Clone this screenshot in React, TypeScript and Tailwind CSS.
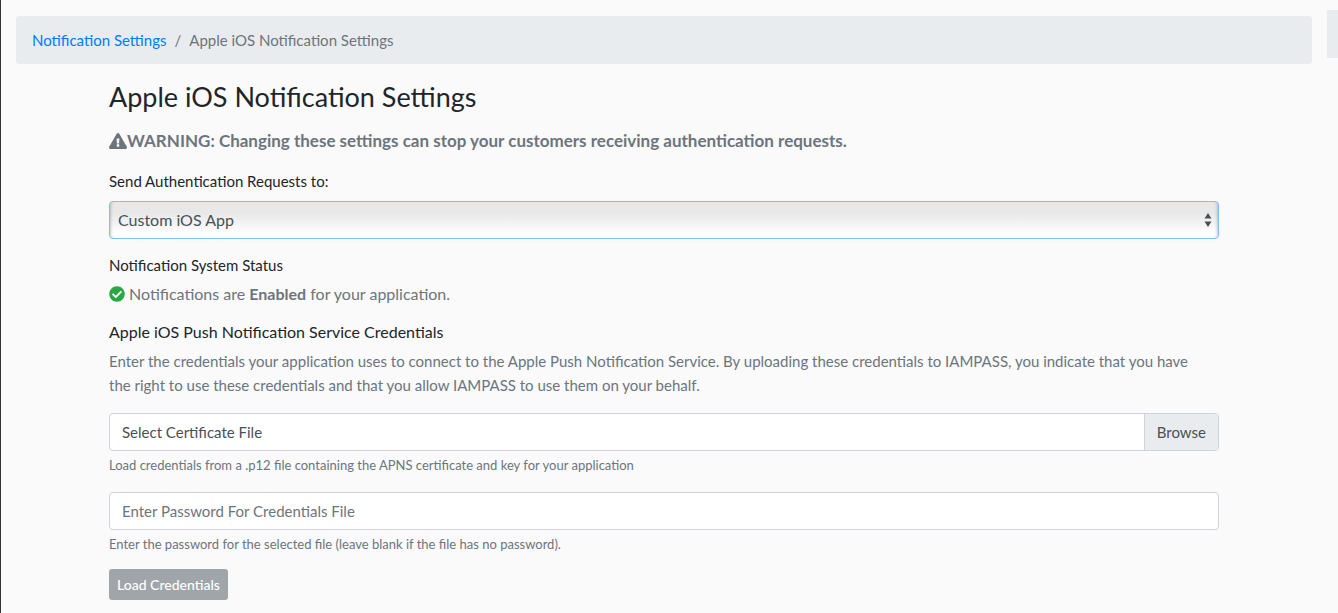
import React from "react";
import { FaCheckCircle, FaExclamationTriangle } from "react-icons/fa";

function Breadcrumb() {
  return (
    <nav aria-label="Breadcrumb" className="rounded bg-[#e8ecef] px-4 py-3">
      <ol className="flex gap-2 text-[#6c757d]">
        <li>
          <a href="#notifications" className="text-[#007bff]">
            Notification Settings
          </a>
        </li>
        <li aria-hidden="true">/</li>
        <li aria-current="page">Apple iOS Notification Settings</li>
      </ol>
    </nav>
  );
}

function TargetSelect() {
  return (
    <div>
      <label htmlFor="target" className="mb-2 block">
        Send Authentication Requests to:
      </label>
      <div className="grid items-center">
        <select
          id="target"
          defaultValue="custom"
          className="col-start-1 row-start-1 h-[38px] w-full appearance-none rounded border border-[#80bdff] bg-linear-to-b from-[#e8e8e8] from-30% to-white to-90% px-2 text-base text-[#495057] shadow-[inset_3px_0_3px_-2px_rgba(0,0,0,0.2),inset_-3px_0_3px_-2px_rgba(0,0,0,0.2)] outline-none"
        >
          <option value="custom">Custom iOS App</option>
          <option value="iampass">IAMPASS App</option>
        </select>
        <svg
          aria-hidden="true"
          viewBox="0 0 8 14"
          className="pointer-events-none col-start-1 row-start-1 mr-[7px] h-3.5 w-2 justify-self-end"
        >
          <path fill="#495057" d="M4 0L0.5 5.5h7zM4 14L0.5 8.5h7z" />
        </svg>
      </div>
    </div>
  );
}

export default function App() {
  return (
    <div className="flex min-h-screen border-l border-[#333333] bg-[#fafafa] font-['Lato',sans-serif] text-[15px] leading-6 text-[#212529]">
      <main className="min-w-0 flex-1 px-[15px] py-4">
        <Breadcrumb />
        <div className="mx-auto mt-4 max-w-[1110px]">
          <h1 className="text-[27px] leading-[34px]">Apple iOS Notification Settings</h1>
          <p className="mt-[15px] mb-4 flex items-center text-[17px] leading-6 font-bold text-[#6c757d]">
            <FaExclamationTriangle aria-hidden="true" className="h-4 w-[18px] shrink-0" />
            WARNING: Changing these settings can stop your customers receiving authentication requests.
          </p>

          <form onSubmit={(event) => event.preventDefault()}>
            <TargetSelect />

            <section className="mt-[14px]">
              <h2>Notification System Status</h2>
              <p className="mt-[5px] flex items-center gap-1 text-base leading-6 text-[#6c757d]">
                <FaCheckCircle aria-hidden="true" className="size-4 shrink-0 text-[#28a745]" />
                <span>
                  Notifications are <strong>Enabled</strong> for your application.
                </span>
              </p>
            </section>

            <section className="mt-[14px]">
              <h2 className="text-base leading-6">Apple iOS Push Notification Service Credentials</h2>
              <p className="mt-[5px] pr-3 text-[#6c757d]">
                Enter the credentials your application uses to connect to the Apple Push Notification
                Service. By uploading these credentials to IAMPASS, you indicate that you have the right
                to use these credentials and that you allow IAMPASS to use them on your behalf.
              </p>

              <div className="mt-4">
                <input id="certificate" type="file" accept=".p12" className="sr-only" />
                <label
                  htmlFor="certificate"
                  className="flex h-[38px] rounded border border-[#ced4da] bg-white text-[#495057]"
                >
                  <span className="flex flex-1 items-center px-3">Select Certificate File</span>
                  <span className="flex items-center rounded-r-[3px] border-l border-[#ced4da] bg-[#e9ecef] px-3">
                    Browse
                  </span>
                </label>
                <p className="mt-1 text-[13px] leading-5 text-[#6c757d]">
                  Load credentials from a .p12 file containing the APNS certificate and key for your
                  application
                </p>
              </div>

              <div className="mt-[17px]">
                <input
                  type="password"
                  aria-label="Password for credentials file"
                  placeholder="Enter Password For Credentials File"
                  className="block h-[38px] w-full rounded border border-[#ced4da] bg-white px-3 placeholder:text-[#6c757d]"
                />
                <p className="mt-1 text-[13px] leading-5 text-[#6c757d]">
                  Enter the password for the selected file (leave blank if the file has no password).
                </p>
              </div>

              <button
                type="submit"
                disabled
                className="mt-[15px] h-[31px] rounded-[3px] bg-[#a0a5a9] px-2 text-sm font-medium text-white"
              >
                Load Credentials
              </button>
            </section>
          </form>
        </div>
      </main>
      <aside className="w-[11px] shrink-0 pt-[10px]">
        <div className="h-12 bg-[#e8ecef]" />
      </aside>
    </div>
  );
}
